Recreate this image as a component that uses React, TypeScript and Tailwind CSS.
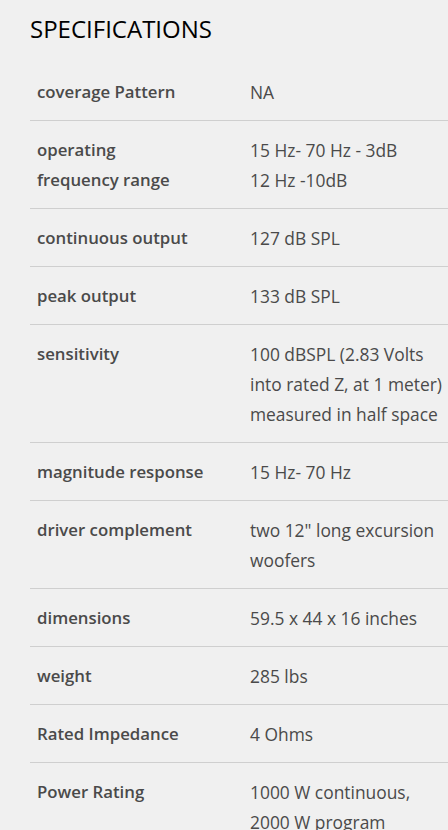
import React from "react";

const rows: { label: string[]; value: string[] }[] = [
  { label: ["coverage Pattern"], value: ["NA"] },
  { label: ["operating", "frequency range"], value: ["15 Hz- 70 Hz - 3dB", "12 Hz -10dB"] },
  { label: ["continuous output"], value: ["127 dB SPL"] },
  { label: ["peak output"], value: ["133 dB SPL"] },
  { label: ["sensitivity"], value: ["100 dBSPL (2.83 Volts", "into rated Z, at 1 meter)", "measured in half space"] },
  { label: ["magnitude response"], value: ["15 Hz- 70 Hz"] },
  { label: ["driver complement"], value: ["two 12\" long excursion", "woofers"] },
  { label: ["dimensions"], value: ["59.5 x 44 x 16 inches"] },
  { label: ["weight"], value: ["285 lbs"] },
  { label: ["Rated Impedance"], value: ["4 Ohms"] },
  { label: ["Power Rating"], value: ["1000 W continuous,", "2000 W program"] },
];

export default function App() {
  return (
    <div
      className="min-h-[830px] w-[448px] overflow-hidden bg-[#f0f0f0] pl-[30px] pt-[14px]"
      style={{ fontFamily: "'Open Sans', Lato, sans-serif" }}
    >
      <h2 className="text-[24px] leading-[30px] text-black">SPECIFICATIONS</h2>
      <div className="mt-[19px]">
        {rows.map((r, i) => (
          <div
            key={i}
            className={`flex pt-[14px] pb-[13px] text-[16.8px] leading-[30px] text-[#4a4a4a] ${
              i < rows.length - 1 ? "border-b border-[#cfcfcf]" : ""
            }`}
          >
            <div className="w-[220px] shrink-0 pl-[7px] font-semibold">
              {r.label.map((l, j) => (
                <div key={j}>{l}</div>
              ))}
            </div>
            <div className="whitespace-nowrap text-[17.4px]">
              {r.value.map((l, j) => (
                <div key={j}>{l}</div>
              ))}
            </div>
          </div>
        ))}
      </div>
    </div>
  );
}
